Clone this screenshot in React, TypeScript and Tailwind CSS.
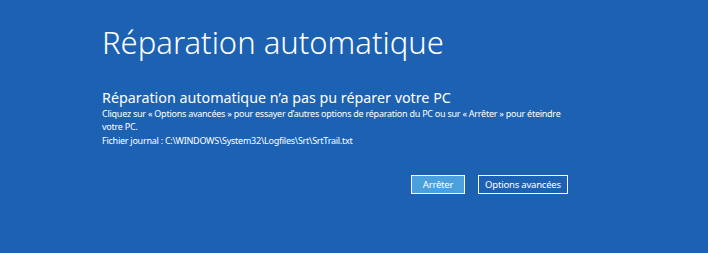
export default function App() {
  return (
    <div className="w-[708px] h-[253px] bg-[#1d62b2] text-white font-['Noto_Sans',_'Liberation_Sans',_sans-serif] overflow-hidden">
      <div className="pl-[102px] pt-[22px] w-[575px]">
        <h1 className="text-[31px] leading-[40px] font-light">Réparation automatique</h1>
        <h2 className="mt-[26px] text-[14.3px] leading-[20px] font-normal">
          Réparation automatique n’a pas pu réparer votre PC
        </h2>
        <div className="text-[9px] leading-[13px] tracking-[-0.25px]">
          <p className="-mt-[1px]">
            Cliquez sur « Options avancées » pour essayer d’autres options de réparation du PC ou sur « Arrêter » pour
            éteindre votre PC.
          </p>
          <p className="mt-[1px]">Fichier journal : C:\WINDOWS\System32\Logfiles\Srt\SrtTrail.txt</p>
        </div>
        <div className="mt-[28px] flex justify-end gap-[13px] pr-[7px]">
          <button className="h-[19px] w-[54px] border border-white bg-[#4aa0dc] text-[9.5px] tracking-[-0.2px] leading-none text-white">
            Arrêter
          </button>
          <button className="h-[19px] w-[90px] border border-white text-[9.5px] tracking-[-0.2px] leading-none text-white">
            Options avancées
          </button>
        </div>
      </div>
    </div>
  );
}
